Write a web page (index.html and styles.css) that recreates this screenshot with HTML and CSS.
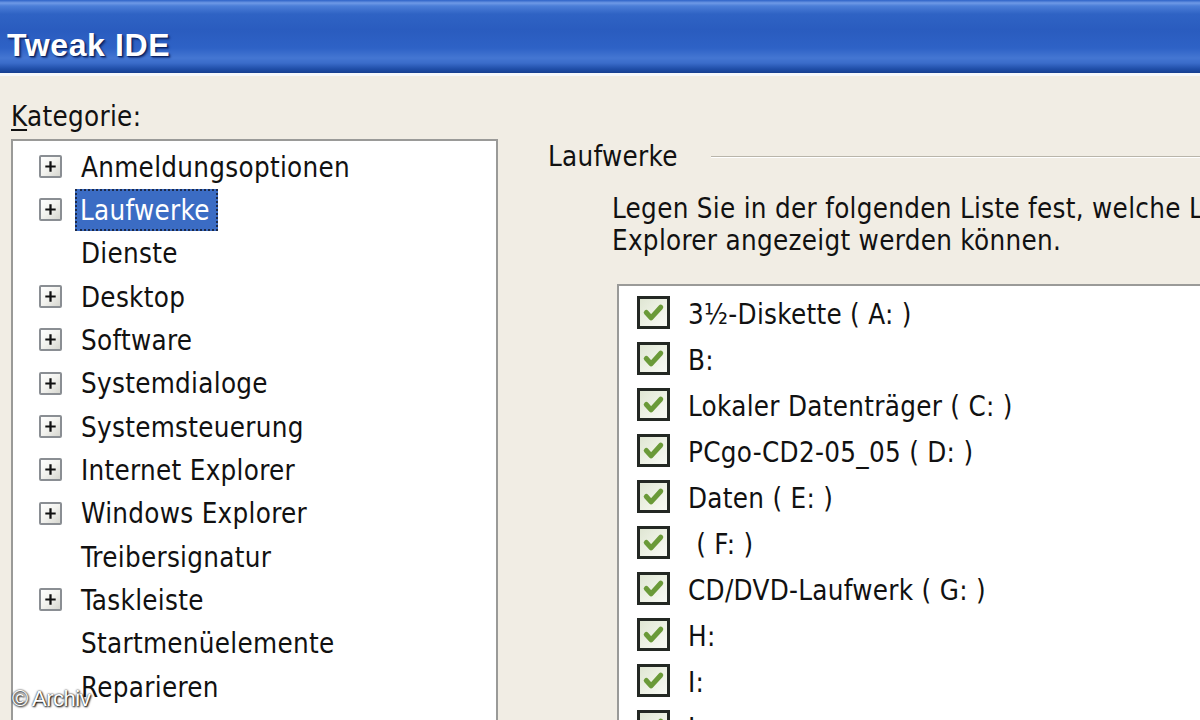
FILE: index.html
```html
<!DOCTYPE html>
<html lang="de">
<head>
<meta charset="utf-8">
<title>Tweak IDE</title>
<link rel="stylesheet" href="styles.css">
</head>
<body>
<div class="window">
  <div class="titlebar">Tweak IDE</div>
  <div class="content">
    <div class="left">
      <div class="cat-label"><span class="acc">K</span>ategorie:</div>
      <div class="tree">
        <div class="row"><span class="exp"><svg viewBox="0 0 22 22" width="22" height="22"><path d="M5 11H17M11 5V17" stroke="#111" stroke-width="2.6"/></svg></span><span class="txt">Anmeldungsoptionen</span></div>
        <div class="row"><span class="exp"><svg viewBox="0 0 22 22" width="22" height="22"><path d="M5 11H17M11 5V17" stroke="#111" stroke-width="2.6"/></svg></span><span class="txt sel">Laufwerke</span></div>
        <div class="row"><span class="exp none"></span><span class="txt">Dienste</span></div>
        <div class="row"><span class="exp"><svg viewBox="0 0 22 22" width="22" height="22"><path d="M5 11H17M11 5V17" stroke="#111" stroke-width="2.6"/></svg></span><span class="txt">Desktop</span></div>
        <div class="row"><span class="exp"><svg viewBox="0 0 22 22" width="22" height="22"><path d="M5 11H17M11 5V17" stroke="#111" stroke-width="2.6"/></svg></span><span class="txt">Software</span></div>
        <div class="row"><span class="exp"><svg viewBox="0 0 22 22" width="22" height="22"><path d="M5 11H17M11 5V17" stroke="#111" stroke-width="2.6"/></svg></span><span class="txt">Systemdialoge</span></div>
        <div class="row"><span class="exp"><svg viewBox="0 0 22 22" width="22" height="22"><path d="M5 11H17M11 5V17" stroke="#111" stroke-width="2.6"/></svg></span><span class="txt">Systemsteuerung</span></div>
        <div class="row"><span class="exp"><svg viewBox="0 0 22 22" width="22" height="22"><path d="M5 11H17M11 5V17" stroke="#111" stroke-width="2.6"/></svg></span><span class="txt">Internet Explorer</span></div>
        <div class="row"><span class="exp"><svg viewBox="0 0 22 22" width="22" height="22"><path d="M5 11H17M11 5V17" stroke="#111" stroke-width="2.6"/></svg></span><span class="txt">Windows Explorer</span></div>
        <div class="row"><span class="exp none"></span><span class="txt">Treibersignatur</span></div>
        <div class="row"><span class="exp"><svg viewBox="0 0 22 22" width="22" height="22"><path d="M5 11H17M11 5V17" stroke="#111" stroke-width="2.6"/></svg></span><span class="txt">Taskleiste</span></div>
        <div class="row"><span class="exp none"></span><span class="txt">Startmenüelemente</span></div>
        <div class="row"><span class="exp none"></span><span class="txt">Reparieren</span></div>
      </div>
    </div>
    <div class="right">
      <div class="group-head"><span class="group-title">Laufwerke</span><span class="etch"></span></div>
      <p class="desc">Legen Sie in der folgenden Liste fest, welche Laufwerke im Windows<br>Explorer angezeigt werden können.</p>
      <div class="list">
        <div class="item"><span class="cb"><svg viewBox="0 0 28 28" width="28" height="28"><path d="M6.5 13.5L11.5 19L21.5 8" fill="none" stroke="#6a9a38" stroke-width="5.2" stroke-linecap="round" stroke-linejoin="round"/></svg></span><span class="label">3½-Diskette ( A: )</span></div>
        <div class="item"><span class="cb"><svg viewBox="0 0 28 28" width="28" height="28"><path d="M6.5 13.5L11.5 19L21.5 8" fill="none" stroke="#6a9a38" stroke-width="5.2" stroke-linecap="round" stroke-linejoin="round"/></svg></span><span class="label">B:</span></div>
        <div class="item"><span class="cb"><svg viewBox="0 0 28 28" width="28" height="28"><path d="M6.5 13.5L11.5 19L21.5 8" fill="none" stroke="#6a9a38" stroke-width="5.2" stroke-linecap="round" stroke-linejoin="round"/></svg></span><span class="label">Lokaler Datenträger ( C: )</span></div>
        <div class="item"><span class="cb"><svg viewBox="0 0 28 28" width="28" height="28"><path d="M6.5 13.5L11.5 19L21.5 8" fill="none" stroke="#6a9a38" stroke-width="5.2" stroke-linecap="round" stroke-linejoin="round"/></svg></span><span class="label">PCgo-CD2-05_05 ( D: )</span></div>
        <div class="item"><span class="cb"><svg viewBox="0 0 28 28" width="28" height="28"><path d="M6.5 13.5L11.5 19L21.5 8" fill="none" stroke="#6a9a38" stroke-width="5.2" stroke-linecap="round" stroke-linejoin="round"/></svg></span><span class="label">Daten ( E: )</span></div>
        <div class="item"><span class="cb"><svg viewBox="0 0 28 28" width="28" height="28"><path d="M6.5 13.5L11.5 19L21.5 8" fill="none" stroke="#6a9a38" stroke-width="5.2" stroke-linecap="round" stroke-linejoin="round"/></svg></span><span class="label">&nbsp;( F: )</span></div>
        <div class="item"><span class="cb"><svg viewBox="0 0 28 28" width="28" height="28"><path d="M6.5 13.5L11.5 19L21.5 8" fill="none" stroke="#6a9a38" stroke-width="5.2" stroke-linecap="round" stroke-linejoin="round"/></svg></span><span class="label">CD/DVD-Laufwerk ( G: )</span></div>
        <div class="item"><span class="cb"><svg viewBox="0 0 28 28" width="28" height="28"><path d="M6.5 13.5L11.5 19L21.5 8" fill="none" stroke="#6a9a38" stroke-width="5.2" stroke-linecap="round" stroke-linejoin="round"/></svg></span><span class="label">H:</span></div>
        <div class="item"><span class="cb"><svg viewBox="0 0 28 28" width="28" height="28"><path d="M6.5 13.5L11.5 19L21.5 8" fill="none" stroke="#6a9a38" stroke-width="5.2" stroke-linecap="round" stroke-linejoin="round"/></svg></span><span class="label">I:</span></div>
        <div class="item"><span class="cb"><svg viewBox="0 0 28 28" width="28" height="28"><path d="M6.5 13.5L11.5 19L21.5 8" fill="none" stroke="#6a9a38" stroke-width="5.2" stroke-linecap="round" stroke-linejoin="round"/></svg></span><span class="label">J:</span></div>
      </div>
    </div>
  </div>
  <div class="watermark">© Archiv</div>
</div>
</body>
</html>
```

FILE: styles.css
```css
html, body {
  margin: 0;
  padding: 0;
}
body {
  width: 1200px;
  height: 720px;
  overflow: hidden;
  background: #f1ede4;
  font-family: "DejaVu Sans Condensed", "DejaVu Sans", sans-serif;
  font-size: 27.5px;
  letter-spacing: 0.3px;
  color: #111111;
}
.window {
  position: relative;
  width: 1200px;
  height: 720px;
  overflow: hidden;
}
.titlebar {
  height: 76px;
  box-sizing: border-box;
  padding: 27px 0 0 7px;
  line-height: 36px;
  font-family: "Liberation Sans", Arial, sans-serif;
  font-weight: bold;
  font-size: 32px;
  letter-spacing: 0.6px;
  color: #ffffff;
  text-shadow: 1px 1px 1px #0b2260, 2px 2px 2px rgba(10, 30, 90, 0.6);
  background: linear-gradient(to bottom,
    #2d62c7 0px,
    #6f9ae6 3px,
    #4b7ed8 6px,
    #2f63c4 14px,
    #2a5cbf 30px,
    #2e62c6 48px,
    #4476d2 58px,
    #3a6cca 63px,
    #1f4ea8 69px,
    #143a88 74px,
    #10307a 76px);
  border-bottom: 3px solid #f6f8fa;
}
.content {
  display: flex;
  align-items: flex-start;
}
.left {
  width: 498px;
  flex: none;
  box-sizing: border-box;
  padding-left: 11px;
}
.cat-label {
  margin-top: 24px;
  line-height: 32px;
}
.acc {
  text-decoration: underline;
  text-underline-offset: 3px;
}
.tree {
  margin-top: 7px;
  height: 640px;
  box-sizing: border-box;
  border: 2px solid #9a9a98;
  background: #ffffff;
  padding-top: 4px;
}
.row {
  display: flex;
  align-items: center;
  height: 43.33px;
  line-height: 32px;
  white-space: nowrap;
}
.exp {
  flex: none;
  width: 23px;
  height: 23px;
  margin-left: 26px;
  margin-right: 15px;
  box-sizing: border-box;
  border: 2px solid #8a8e93;
  border-radius: 2px;
  background: linear-gradient(135deg, #ffffff 0%, #f2f2ee 50%, #d6d6cf 100%);
  display: flex;
  align-items: center;
  justify-content: center;
}
.exp svg {
  display: block;
  width: 19px;
  height: 19px;
}
.exp.none {
  border: none;
  background: none;
}
.txt {
  padding: 0 2px;
  border: 2px solid transparent;
}
.txt.sel {
  margin-left: -2px;
  padding: 3px 6px 3px 3px;
  background: #3b6cc4;
  color: #ffffff;
  border: 2px dotted #1c2a4a;
}
.right {
  flex: 1;
  min-width: 0;
  overflow: hidden;
}
.group-head {
  display: flex;
  align-items: center;
  margin-top: 64px;
  padding-left: 50px;
  line-height: 32px;
}
.group-title {
  flex: none;
}
.etch {
  flex: 1;
  height: 1px;
  margin-left: 33px;
  margin-top: 2px;
  background: #b9b5aa;
  border-bottom: 1px solid #ffffff;
}
.desc {
  margin: 20px 0 0 114px;
  line-height: 32px;
  white-space: nowrap;
}
.list {
  margin: 28px 0 0 119px;
  width: 900px;
  height: 600px;
  box-sizing: border-box;
  border: 2px solid #9a9a98;
  background: #ffffff;
  padding: 5px 0 0 18px;
}
.item {
  display: flex;
  align-items: flex-start;
  height: 46px;
  line-height: 46px;
  white-space: nowrap;
}
.cb {
  flex: none;
  width: 33px;
  height: 33px;
  margin-top: 5px;
  margin-right: 18px;
  box-sizing: border-box;
  border: 3px solid #232823;
  background: linear-gradient(135deg, #dfe6d3 0%, #edf1e4 50%, #f8faf4 100%);
  display: flex;
  align-items: center;
  justify-content: center;
}
.cb svg {
  display: block;
}
.watermark {
  position: absolute;
  left: 12px;
  bottom: 8px;
  font-family: "Liberation Sans", Arial, sans-serif;
  font-size: 22px;
  letter-spacing: -0.5px;
  color: #ffffff;
  text-shadow: 0 0 2px #000, 1px 1px 2px #000;
}
```
